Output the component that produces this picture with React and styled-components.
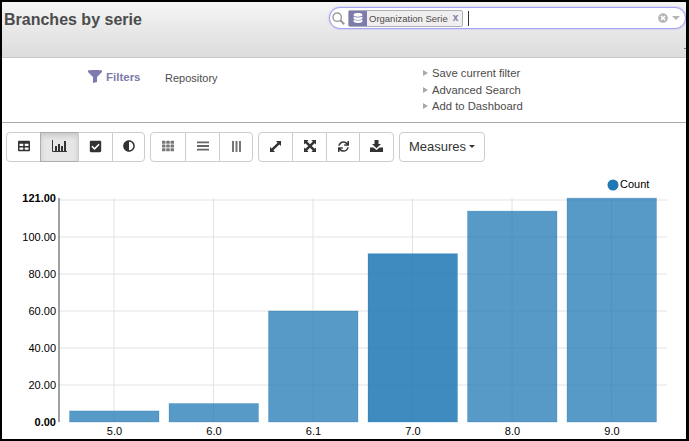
import styled, { createGlobalStyle } from 'styled-components';
import { FaDatabase, FaTable, FaCheckSquare, FaAdjust, FaTh, FaSync, FaTimesCircle } from 'react-icons/fa';

const GlobalStyle = createGlobalStyle`
  html, body {
    margin: 0;
    padding: 0;
    background: #000;
  }
  body {
    font-family: "Liberation Sans", Arial, sans-serif;
  }
`;

const Frame = styled.div`
  box-sizing: border-box;
  width: 689px;
  height: 441px;
  border-style: solid;
  border-color: #000;
  border-width: 2px 3px 2px 2px;
  background: #fff;
  overflow: hidden;
`;

const Header = styled.div`
  position: relative;
  box-sizing: border-box;
  height: 56px;
  display: flex;
  justify-content: space-between;
  align-items: flex-start;
  background: linear-gradient(#f5f5f5, #dcdcdc);
  border-bottom: 1px solid #c8c8c8;

  &::after {
    content: "";
    position: absolute;
    right: 0;
    top: 46px;
    width: 2px;
    height: 1px;
    background: #777;
  }
`;

const Title = styled.h1`
  margin: 8px 0 0 2px;
  font-size: 16px;
  line-height: 20px;
  font-weight: 700;
  color: #4c4c4c;
`;

const SearchBox = styled.div`
  box-sizing: border-box;
  width: 357px;
  height: 22px;
  margin-top: 5px;
  padding: 0 5px 0 2px;
  display: flex;
  align-items: center;
  background: #fff;
  border: 1px solid #a4a4f2;
  border-radius: 11px;
  box-shadow: 0 0 2px #a8a8f4;
  color: #999;
`;

const Facet = styled.div`
  box-sizing: border-box;
  height: 17px;
  width: 115px;
  margin-left: 3px;
  display: flex;
  align-items: center;
  background: #f0eeee;
  border: 1px solid #afafb6;
  border-radius: 2px;
  font-size: 9.5px;
  white-space: nowrap;
  color: #4c4c4c;
`;

const FacetIcon = styled.span`
  width: 18px;
  height: 100%;
  margin-right: 2px;
  display: flex;
  align-items: center;
  justify-content: center;
  background: #7c7bad;
  color: #fff;
`;

const FacetRemove = styled.span`
  margin: -2px 0 0 5px;
  font-size: 10px;
  font-weight: 700;
  color: #7c7bad;
`;

const Cursor = styled.span`
  width: 1px;
  height: 15px;
  margin-left: 5px;
  background: #333;
`;

const SearchEnd = styled.div`
  margin-left: auto;
  display: flex;
  align-items: center;
  gap: 4px;
  color: #b5b5b5;
`;

const Caret = styled.span`
  width: 0;
  height: 0;
  border-style: solid;
  border-width: ${(p) => (p.$small ? '3px 3px 0' : '4px 4px 0')};
  border-color: ${(p) => p.$color || '#b5b5b5'} transparent transparent;
`;

const FilterBar = styled.div`
  box-sizing: border-box;
  height: 65px;
  display: flex;
  align-items: flex-start;
  border-bottom: 1px solid #aaa;
`;

const FilterLabel = styled.div`
  margin: 12px 0 0 86px;
  width: 77px;
  display: flex;
  align-items: center;
  gap: 4px;
  font-size: 11.5px;
  font-weight: 700;
  color: #7c7bad;
`;

const Repository = styled.div`
  margin-top: 14px;
  width: 258px;
  font-size: 11px;
  color: #4c4c4c;
`;

const Links = styled.ul`
  margin: 7px 0 0;
  padding: 0;
  list-style: none;
  font-size: 11.25px;
  line-height: 16.5px;
  color: #4c4c4c;
`;

const LinkItem = styled.li`
  display: flex;
  align-items: center;
  gap: 4px;

  &::before {
    content: "";
    border-style: solid;
    border-width: 3px 0 3px 5px;
    border-color: transparent transparent transparent #aaa;
  }
`;

const Toolbar = styled.div`
  display: flex;
  gap: 5px;
  padding: 9px 0 0 4px;
`;

const Group = styled.div`
  display: flex;
`;

const Button = styled.div`
  box-sizing: border-box;
  width: ${(p) => p.$width}px;
  height: 30px;
  margin-left: -1px;
  padding-bottom: 2px;
  display: flex;
  align-items: center;
  justify-content: center;
  gap: 3px;
  background: ${(p) => (p.$active ? '#e6e6e6' : '#fff')};
  border: 1px solid ${(p) => (p.$active ? '#adadad' : '#ccc')};
  box-shadow: ${(p) => (p.$active ? 'inset 0 3px 5px rgba(0,0,0,.125)' : 'none')};
  color: ${(p) => p.$tone || '#333'};
  font-size: 13px;

  &:first-child {
    margin-left: 0;
    border-radius: 4px 0 0 4px;
  }
  &:last-child {
    border-radius: 0 4px 4px 0;
  }
  &:only-child {
    border-radius: 4px;
  }
`;

const ChartSvg = styled.svg`
  display: block;
`;

const AxisText = styled.text`
  font-size: 11px;
  fill: #000;
  font-weight: ${(p) => (p.$bold ? 700 : 400)};
`;

const LegendText = styled.text`
  font-size: 11px;
  fill: #000;
`;

const SearchIcon = () => (
  <svg width="13" height="13" viewBox="0 0 13 13">
    <circle cx="5.2" cy="5.2" r="4.2" fill="none" stroke="#999" strokeWidth="1.4" />
    <path d="M8.3 8.3L12.2 12.2" stroke="#999" strokeWidth="2" />
  </svg>
);

const FunnelIcon = () => (
  <svg width="14" height="13" viewBox="0 0 14 13">
    <path d="M0 0.5C3 -0.2 11 -0.2 14 0.5V2L9 7V12L5 13V7L0 2Z" fill="#7c7bad" />
  </svg>
);

const BarChartIcon = () => (
  <svg width="15" height="12" viewBox="0 0 15 12">
    <path d="M0.5 0v11.5H15" fill="none" stroke="#333" strokeWidth="1" />
    <path d="M3 6h2v5H3zM6 4h2v7H6zM9 6h2v5H9zM12 1h2v10h-2z" fill="#333" />
  </svg>
);

const RowsIcon = () => (
  <svg width="12" height="10" viewBox="0 0 12 10">
    <path d="M0 0.5h12v1.8H0zM0 4.1h12v1.8H0zM0 7.7h12v1.8H0z" fill="#666" />
  </svg>
);

const ColumnsIcon = () => (
  <svg width="9" height="11" viewBox="0 0 9 11">
    <path d="M0 0h2v11H0zM3.5 0h2v11H3.5zM7 0h2v11H7z" fill="#777" />
  </svg>
);

const ResizeIcon = () => (
  <svg width="11" height="11" viewBox="0 0 12 12">
    <path d="M6.5 0H12V5.5L10.2 3.7L3.7 10.2L5.5 12H0V6.5L1.8 8.3L8.3 1.8Z" fill="#333" />
  </svg>
);

const FullscreenIcon = () => (
  <svg width="12" height="12" viewBox="0 0 12 12">
    <path
      d="M0 0H4.6L3.2 1.4L6 4.2L8.8 1.4L7.4 0H12V4.6L10.6 3.2L7.8 6L10.6 8.8L12 7.4V12H7.4L8.8 10.6L6 7.8L3.2 10.6L4.6 12H0V7.4L1.4 8.8L4.2 6L1.4 3.2L0 4.6Z"
      fill="#333"
    />
  </svg>
);

const DownloadIcon = () => (
  <svg width="13" height="12" viewBox="0 0 13 12">
    <path d="M4.5 0H8.5V4H11L6.5 8.2L2 4H4.5Z" fill="#333" />
    <path d="M0 7.5H3.4L6.5 10L9.6 7.5H13V12H0Z" fill="#333" />
  </svg>
);

const data = [
  { label: '5.0', value: 6 },
  { label: '6.0', value: 10 },
  { label: '6.1', value: 60 },
  { label: '7.0', value: 91, hover: true },
  { label: '8.0', value: 114 },
  { label: '9.0', value: 121 },
];

const ticks = [
  { label: '100.00', y: 237 },
  { label: '80.00', y: 274 },
  { label: '60.00', y: 311 },
  { label: '40.00', y: 348 },
  { label: '20.00', y: 385 },
];

const baseY = 422;
const scale = 37 / 20;
const centerX = (i) => 114 + i * 99.5;

function Chart() {
  return (
    <ChartSvg width="684" height="276" viewBox="2 162 684 276">
      <circle cx="613" cy="185" r="5.5" fill="#1f77b4" />
      <LegendText x="620" y="188">Count</LegendText>

      {[200, ...ticks.map((t) => t.y)].map((y) => (
        <line key={y} x1="59" x2="667" y1={y} y2={y} stroke="#e2e2e2" />
      ))}
      {data.map((d, i) => (
        <line key={d.label} x1={centerX(i)} x2={centerX(i)} y1="198" y2={baseY} stroke="#e2e2e2" />
      ))}

      {data.map((d, i) => (
        <rect
          key={d.label}
          x={centerX(i) - 44.5}
          y={baseY - d.value * scale}
          width="89.5"
          height={d.value * scale}
          fill="#1f77b4"
          fillOpacity={d.hover ? 0.86 : 0.75}
          stroke="#1f77b4"
          strokeOpacity="0.25"
        />
      ))}

      <line x1="59" x2="59" y1="198" y2={baseY} stroke="#444" />

      <AxisText $bold x="56" y="202" textAnchor="end">121.00</AxisText>
      {ticks.map((t) => (
        <AxisText key={t.label} x="56" y={t.y + 4} textAnchor="end">{t.label}</AxisText>
      ))}
      <AxisText $bold x="56" y="426" textAnchor="end">0.00</AxisText>

      {data.map((d, i) => (
        <AxisText key={d.label} x={centerX(i) + 0.5} y="435" textAnchor="middle">{d.label}</AxisText>
      ))}
    </ChartSvg>
  );
}

export default function App() {
  return (
    <Frame>
      <GlobalStyle />
      <Header>
        <Title>Branches by serie</Title>
        <SearchBox>
          <SearchIcon />
          <Facet>
            <FacetIcon><FaDatabase size={10} /></FacetIcon>
            Organization Serie
            <FacetRemove>x</FacetRemove>
          </Facet>
          <Cursor />
          <SearchEnd>
            <FaTimesCircle size={10} />
            <Caret />
          </SearchEnd>
        </SearchBox>
      </Header>

      <FilterBar>
        <FilterLabel><FunnelIcon />Filters</FilterLabel>
        <Repository>Repository</Repository>
        <Links>
          <LinkItem>Save current filter</LinkItem>
          <LinkItem>Advanced Search</LinkItem>
          <LinkItem>Add to Dashboard</LinkItem>
        </Links>
      </FilterBar>

      <Toolbar>
        <Group>
          <Button $width={35}><FaTable size={12} /></Button>
          <Button $width={39} $active><BarChartIcon /></Button>
          <Button $width={35}><FaCheckSquare size={13} /></Button>
          <Button $width={33}><FaAdjust size={12} /></Button>
        </Group>
        <Group>
          <Button $width={36} $tone="#777"><FaTh size={12} /></Button>
          <Button $width={35}><RowsIcon /></Button>
          <Button $width={34}><ColumnsIcon /></Button>
        </Group>
        <Group>
          <Button $width={35}><ResizeIcon /></Button>
          <Button $width={35}><FullscreenIcon /></Button>
          <Button $width={34}><FaSync size={11} /></Button>
          <Button $width={35}><DownloadIcon /></Button>
        </Group>
        <Group>
          <Button $width={86}>Measures<Caret $color="#333" $small /></Button>
        </Group>
      </Toolbar>

      <Chart />
    </Frame>
  );
}
